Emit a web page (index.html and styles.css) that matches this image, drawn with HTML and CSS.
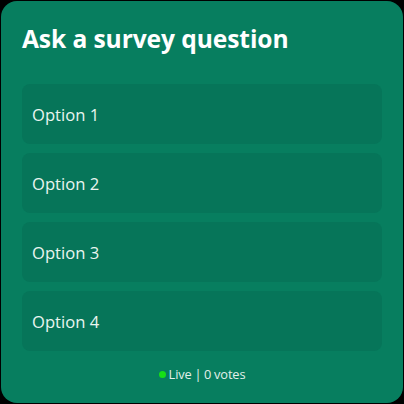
FILE: index.html
```html
<!DOCTYPE html>
<html>
<head>
<meta charset="utf-8">
<link rel="stylesheet" href="styles.css">
</head>
<body>
<div class="card">
  <h1 class="title">Ask a survey question</h1>
  <div class="options">
    <div class="option">Option 1</div>
    <div class="option">Option 2</div>
    <div class="option">Option 3</div>
    <div class="option">Option 4</div>
  </div>
  <div class="footer"><span class="dot"></span>Live | 0 votes</div>
</div>
</body>
</html>
```
FILE: styles.css
```css
html, body {
  margin: 0;
  padding: 0;
  background: #000;
  width: 404px;
  height: 404px;
  overflow: hidden;
}
body {
  font-family: "Open Sans", "Noto Sans", sans-serif;
}
.card {
  margin: 1px;
  width: 402px;
  height: 402px;
  box-sizing: border-box;
  background: #077e5f;
  border-radius: 16px;
  padding: 21px 21px 0 21px;
  display: flex;
  flex-direction: column;
}
.title {
  margin: 0;
  color: #fff;
  font-size: 24.6px;
  font-weight: 700;
  line-height: 34px;
  letter-spacing: -0.1px;
}
.options {
  margin-top: 28px;
  display: flex;
  flex-direction: column;
  gap: 9px;
}
.option {
  height: 60px;
  background: #067559;
  border-radius: 8px;
  display: flex;
  align-items: center;
  padding-left: 10px;
  padding-top: 1px;
  box-sizing: border-box;
  color: #eaf5f0;
  font-size: 16.6px;
}
.footer {
  margin-top: 14px;
  display: flex;
  justify-content: center;
  align-items: center;
  color: #e2f0ea;
  font-size: 12.8px;
  line-height: 18px;
  letter-spacing: -0.1px;
  word-spacing: -0.5px;
}
.dot {
  width: 7px;
  height: 7px;
  border-radius: 50%;
  background: #16e016;
  margin-right: 3px;
}
```
